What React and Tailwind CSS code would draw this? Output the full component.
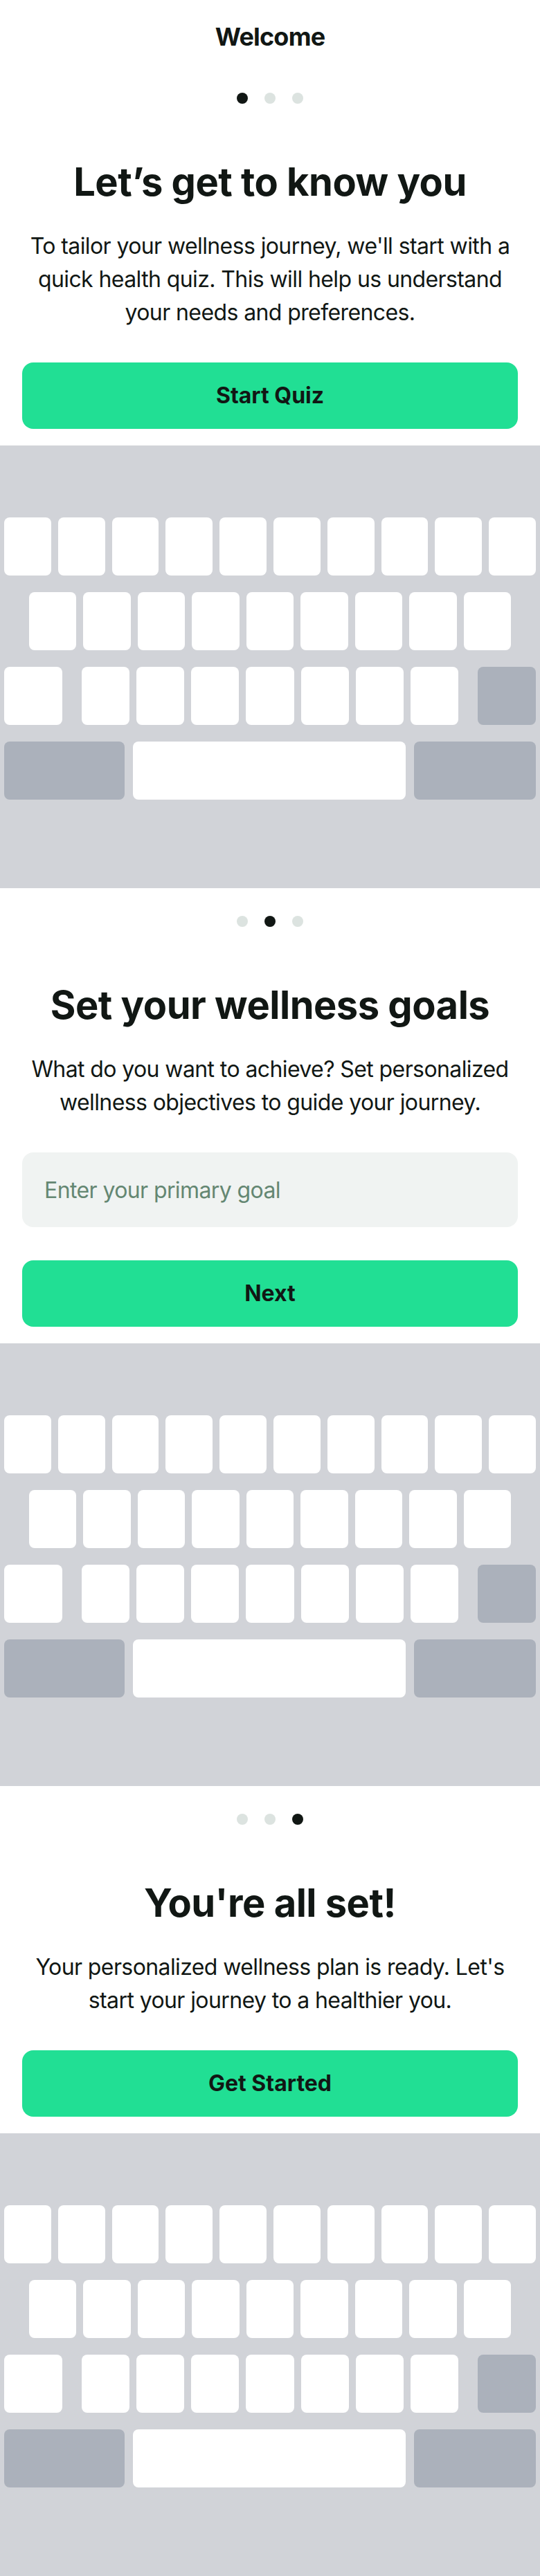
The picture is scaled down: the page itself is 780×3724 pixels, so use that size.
import React from 'react';

const Dots = ({ active }) => (
  <div className="flex justify-center gap-[24px] pt-[40px]">
    {[0, 1, 2].map((i) => (
      <span
        key={i}
        className={i === active ? 'h-4 w-4 rounded-full bg-[#111714]' : 'h-4 w-4 rounded-full bg-[#dce3e0]'}
      />
    ))}
  </div>
);

const Key = ({ className = '' }) => <div className={`h-[84px] rounded-[8px] ${className}`} />;

const Keyboard = () => (
  <div className="flex h-[640px] flex-col gap-[24px] bg-[#d1d3d8] px-[6px] pt-[104px]">
    <div className="flex gap-[10px]">
      {Array.from({ length: 10 }).map((_, i) => (
        <Key key={i} className="flex-1 bg-white" />
      ))}
    </div>
    <div className="flex gap-[10px] px-[36px]">
      {Array.from({ length: 9 }).map((_, i) => (
        <Key key={i} className="flex-1 bg-white" />
      ))}
    </div>
    <div className="flex gap-[28px]">
      <Key className="w-[84px] bg-white" />
      <div className="flex flex-1 gap-[10px]">
        {Array.from({ length: 7 }).map((_, i) => (
          <Key key={i} className="flex-1 bg-white" />
        ))}
      </div>
      <Key className="w-[84px] bg-[#abb1bb]" />
    </div>
    <div className="flex gap-[12px]">
      <Key className="w-[174px] bg-[#abb1bb]" />
      <Key className="flex-1 bg-white" />
      <Key className="w-[176px] bg-[#abb1bb]" />
    </div>
  </div>
);

const Step = ({ active, title, text, children }) => (
  <section className="bg-white px-[32px] pb-[24px]">
    <Dots active={active} />
    <h1 className="mt-[78px] text-center text-[56px] leading-[70px] font-bold tracking-[-0.5px] text-[#111714]">
      {title}
    </h1>
    <p className="mt-[34px] text-center text-[32px] leading-[48px] tracking-[-0.6px] text-[#111714]">{text}</p>
    {children}
  </section>
);

const GreenButton = ({ label }) => (
  <button className="mt-[48px] h-[96px] w-full rounded-[16px] bg-[#21df94] text-[32px] font-bold text-[#111714]">
    {label}
  </button>
);

export default function App() {
  return (
    <div className="w-[780px] bg-white font-['Inter',sans-serif]">
      <header className="h-[94px] pt-[26px] text-center text-[36px] leading-[54px] font-bold tracking-[-0.8px] text-[#111714]">
        Welcome
      </header>
      <Step
        active={0}
        title="Let’s get to know you"
        text="To tailor your wellness journey, we'll start with a quick health quiz. This will help us understand your needs and preferences."
      >
        <GreenButton label="Start Quiz" />
      </Step>
      <Keyboard />
      <Step
        active={1}
        title="Set your wellness goals"
        text="What do you want to achieve? Set personalized wellness objectives to guide your journey."
      >
        <input
          type="text"
          placeholder="Enter your primary goal"
          className="mt-[48px] h-[108px] w-full rounded-[16px] bg-[#f0f3f2] px-[32px] text-[32px] tracking-[-0.6px] text-[#111714] outline-none placeholder:text-[#648772]"
        />
        <GreenButton label="Next" />
      </Step>
      <Keyboard />
      <Step
        active={2}
        title="You're all set!"
        text="Your personalized wellness plan is ready. Let's start your journey to a healthier you."
      >
        <GreenButton label="Get Started" />
      </Step>
      <Keyboard />
    </div>
  );
}
